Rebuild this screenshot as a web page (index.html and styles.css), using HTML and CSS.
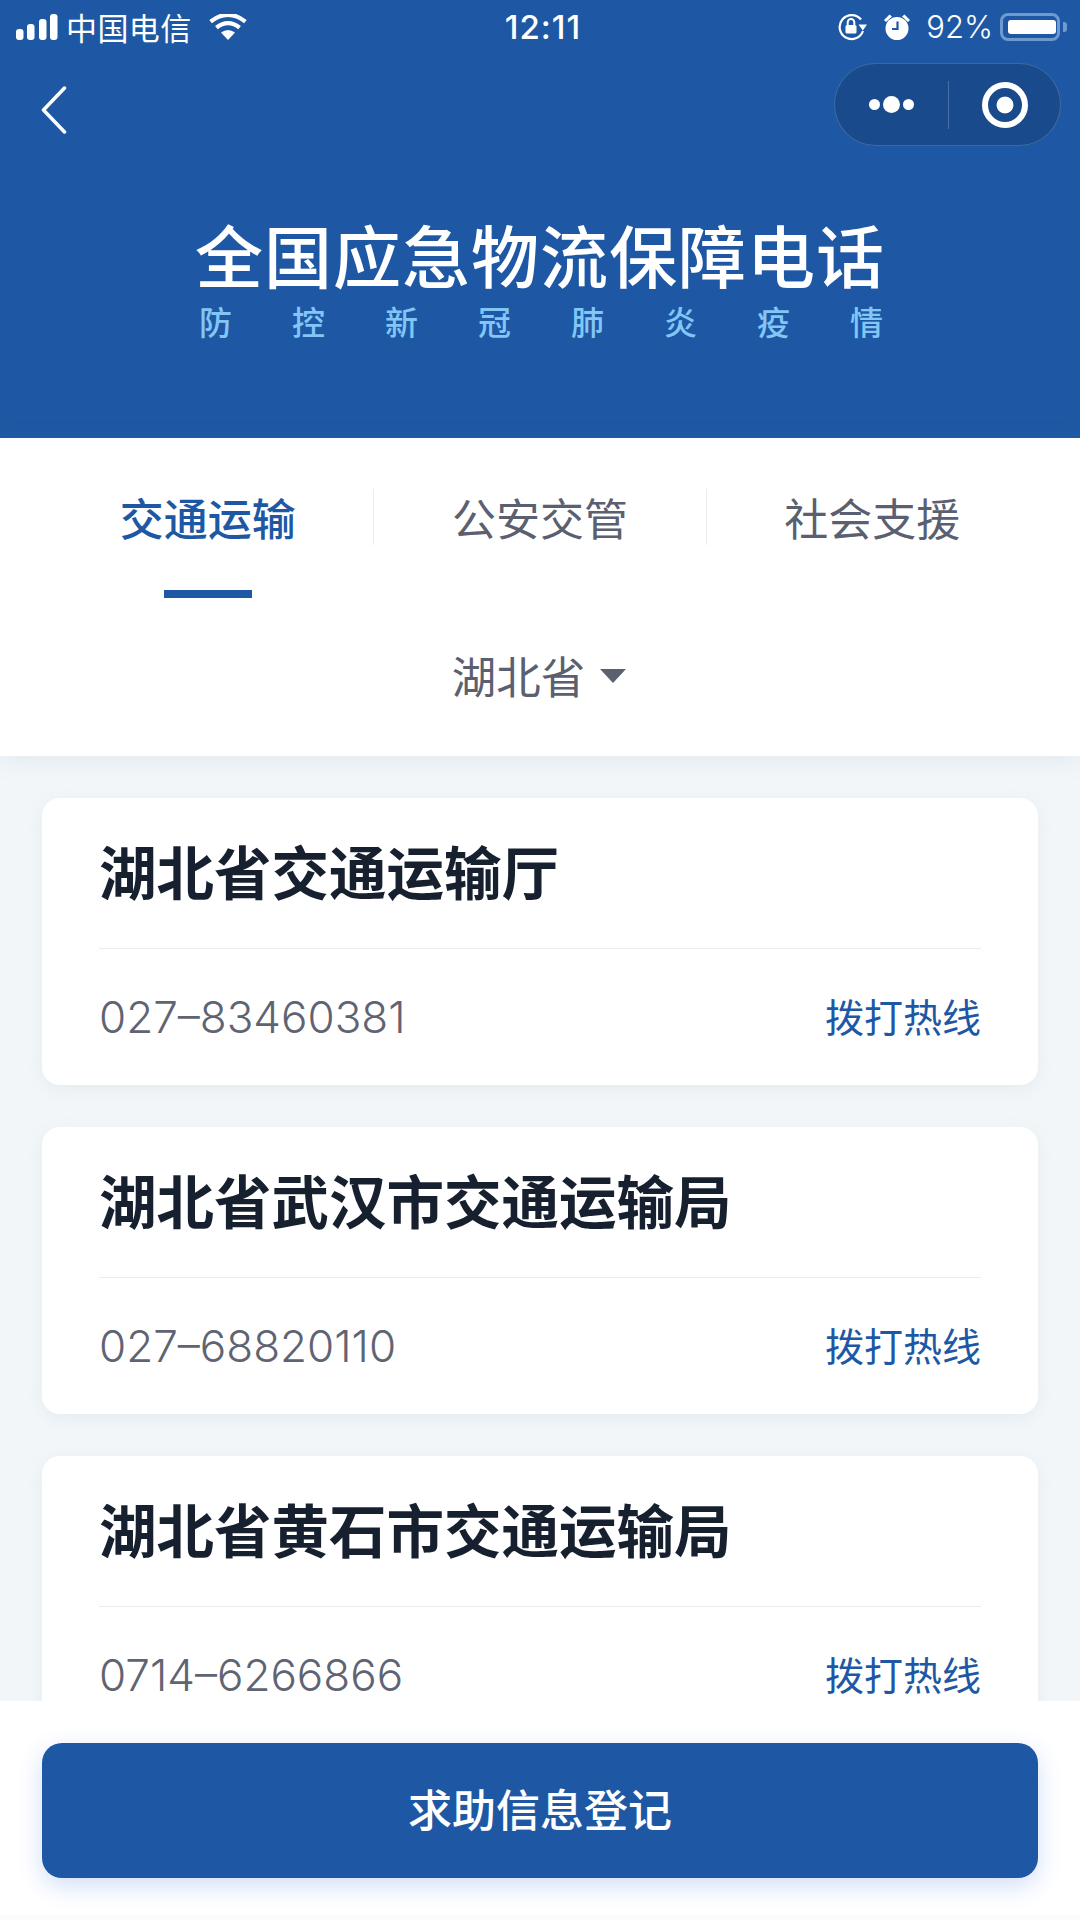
FILE: index.html
```html
<!DOCTYPE html>
<html lang="zh-CN">
<head>
<meta charset="utf-8">
<title>全国应急物流保障电话</title>
<link rel="stylesheet" href="styles.css">
</head>
<body>
<div class="page">
  <header class="hero">
    <div class="status">
      <div class="status-left">
        <svg class="signal" viewBox="0 0 42 26" width="42" height="26" fill="#fff">
          <rect x="0" y="15" width="7.5" height="11" rx="3"/>
          <rect x="11" y="10" width="7.5" height="16" rx="3"/>
          <rect x="23" y="5" width="7.5" height="21" rx="3"/>
          <rect x="34" y="0" width="7.5" height="26" rx="3"/>
        </svg>
        <span class="carrier">中国电信</span>
        <svg class="wifi" viewBox="0 0 38 26" width="38" height="26">
          <path d="M19 26 12 18.6Q19 13.4 26 18.6Z" fill="#fff"/>
          <path d="M7.4 13.6Q19 4.6 30.6 13.6" fill="none" stroke="#fff" stroke-width="4.2"/>
          <path d="M1.6 7.6Q19-6 36.4 7.6" fill="none" stroke="#fff" stroke-width="4.2"/>
        </svg>
      </div>
      <span class="clock">12:11</span>
      <div class="status-right">
        <svg class="lock" viewBox="0 0 30 28" width="30" height="28">
          <path d="M23 6.500A12 12 0 1 0 25 18" fill="none" stroke="#fff" stroke-width="2.200"/>
          <path d="M20.500 11.500h8.500L24.800 17.500Z" fill="#fff"/>
          <rect x="7.500" y="12" width="11" height="8.500" rx="1.500" fill="#fff"/>
          <path d="M9.700 12V9.300a3.300 3.300 0 0 1 6.600 0V12" fill="none" stroke="#fff" stroke-width="2"/>
        </svg>
        <svg class="alarm" viewBox="0 0 28 28" width="28" height="28">
          <circle cx="14" cy="15.500" r="11.500" fill="#fff"/>
          <path d="M1 7 6.500 1.500 9 3.500 3 9ZM27 7 21.500 1.500 19 3.500 25 9Z" fill="#fff"/>
          <path d="M14.500 8.500V16H9" fill="none" stroke="#1e58a4" stroke-width="2.200"/>
        </svg>
        <span class="percent">92%</span>
        <div class="battery"><div class="battery-level"></div></div>
        <div class="battery-cap"></div>
      </div>
    </div>
    <nav class="navbar">
      <svg class="back" viewBox="0 0 26 48" width="26" height="48">
        <path d="M23.500 2 2.500 24 23.500 46" fill="none" stroke="#fff" stroke-width="3.500" stroke-linecap="round" stroke-linejoin="round"/>
      </svg>
      <div class="capsule">
        <div class="capsule-dots">
          <span class="dot"></span><span class="dot dot-big"></span><span class="dot"></span>
        </div>
        <div class="capsule-line"></div>
        <div class="capsule-ring"></div>
      </div>
    </nav>
    <div class="headline">
      <h1 class="title">全国应急物流保障电话</h1>
      <p class="subtitle">防控新冠肺炎疫情</p>
    </div>
  </header>

  <section class="filters">
    <div class="tabs">
      <div class="tab tab-on">交通运输</div>
      <div class="tab">公安交管</div>
      <div class="tab">社会支援</div>
    </div>
    <div class="region">
      <span>湖北省</span>
      <svg class="caret" viewBox="0 0 26 14" width="26" height="14"><path d="M0 0H26L13 14Z" fill="#5b6070"/></svg>
    </div>
  </section>

  <main class="list">
    <article class="card">
      <h2 class="card-title">湖北省交通运输厅</h2>
      <div class="card-row">
        <span class="phone">027–83460381</span>
        <span class="call">拨打热线</span>
      </div>
    </article>
    <article class="card">
      <h2 class="card-title">湖北省武汉市交通运输局</h2>
      <div class="card-row">
        <span class="phone">027–68820110</span>
        <span class="call">拨打热线</span>
      </div>
    </article>
    <article class="card">
      <h2 class="card-title">湖北省黄石市交通运输局</h2>
      <div class="card-row">
        <span class="phone">0714–6266866</span>
        <span class="call">拨打热线</span>
      </div>
    </article>
  </main>

  <footer class="bottom">
    <div class="submit">求助信息登记</div>
  </footer>
</div>
</body>
</html>
```
FILE: styles.css
```css
* { box-sizing: border-box; }

html, body { margin: 0; padding: 0; }

body {
  font-family: "Noto Sans CJK SC", "Liberation Sans", sans-serif;
  background: #f2f6f9;
}

.page {
  width: 1080px;
  height: 1920px;
  display: flex;
  flex-direction: column;
  overflow: hidden;
}

/* Blue header: system bar, navigation row and headline */
.hero {
  height: 438px;
  flex: none;
  background: #1e58a4;
  color: #fff;
}

.status {
  height: 56px;
  padding: 0 13px 2px 16px;
  display: grid;
  grid-template-columns: 1fr auto 1fr;
  align-items: center;
}

.status-left, .status-right {
  display: flex;
  align-items: center;
}

.status-right { justify-content: flex-end; }

.carrier {
  margin-left: 8px;
  font-size: 31px;
  line-height: 36px;
  letter-spacing: 0.4px;
  font-weight: 400;
}

.wifi { margin-left: 17px; }

.clock {
  margin-left: 3px;
  font-family: "Inter", sans-serif;
  font-size: 33px;
  line-height: 36px;
  font-weight: 500;
  letter-spacing: 1px;
}

.lock { margin-right: 15px; }

.percent {
  margin: 0 7px 0 15px;
  font-family: "Inter", sans-serif;
  font-size: 31px;
  line-height: 36px;
  font-weight: 300;
}

.battery {
  width: 60px;
  height: 28px;
  padding: 4px;
  border: 3px solid #6f9ad0;
  border-radius: 8px;
}

.battery-level {
  width: 48px;
  height: 100%;
  margin-left: 1px;
  background: #fff;
  border-radius: 3px;
}

.battery-cap {
  width: 4px;
  height: 10px;
  margin-left: 3px;
  background: #6f9ad0;
  border-radius: 0 3px 3px 0;
}

.navbar {
  height: 95px;
  padding: 2px 19px 0 41px;
  display: flex;
  align-items: center;
  justify-content: space-between;
}

.back { margin-top: 10px; }

.capsule {
  width: 227px;
  height: 83px;
  display: flex;
  align-items: center;
  background: rgba(0, 0, 0, 0.14);
  border: 1px solid rgba(255, 255, 255, 0.16);
  border-radius: 42px;
}

.capsule-dots {
  width: 113px;
  display: flex;
  align-items: center;
  justify-content: center;
  gap: 3px;
}

.dot {
  width: 11px;
  height: 11px;
  background: #fff;
  border-radius: 50%;
}

.dot-big { width: 17px; height: 17px; }

.capsule-line {
  width: 1px;
  height: 48px;
  background: rgba(255, 255, 255, 0.2);
}

.capsule-ring {
  width: 46px;
  height: 46px;
  margin-left: 33px;
  border: 6px solid #fff;
  border-radius: 50%;
  background: radial-gradient(circle, #fff 0 8px, transparent 8.8px);
}

.headline {
  margin-top: 68px;
  text-align: center;
}

.title {
  margin: 0;
  font-size: 68px;
  line-height: 70px;
  font-weight: 500;
  letter-spacing: 1px;
}

.subtitle {
  margin: 12px 0 0;
  font-size: 33px;
  line-height: 40px;
  font-weight: 500;
  letter-spacing: 60px;
  padding-left: 62px;
  color: #82c6f6;
}

/* Tabs and province picker */
.filters {
  height: 318px;
  flex: none;
  background: #fff;
  box-shadow: 0 4px 22px rgba(110, 145, 155, 0.12);
  position: relative;
}

.tabs {
  height: 160px;
  padding: 50px 42px 0;
  display: flex;
  align-items: flex-start;
}

.tab {
  position: relative;
  flex: 1;
  height: 56px;
  font-size: 44px;
  line-height: 56px;
  text-align: center;
  font-weight: 400;
  color: #5b6070;
  border-left: 1px solid #ebedf0;
  top: 1px;
}

.tab:first-child { border-left: 0; }

.tab-on {
  color: #1e58a4;
  font-weight: 500;
}

.tab-on::after {
  content: "";
  position: absolute;
  left: 50%;
  top: 101px;
  width: 88px;
  height: 8px;
  margin-left: -44px;
  background: #1e58a4;
}

.region {
  height: 78px;
  margin-top: 38px;
  padding-right: 2px;
  display: flex;
  align-items: center;
  justify-content: center;
  gap: 15px;
  font-size: 44.500px;
  line-height: 56px;
  font-weight: 400;
  color: #5b6070;
}

.caret { margin-top: 1px; }

/* Contact cards */
.list {
  flex: 1;
  min-height: 0;
  overflow: hidden;
  padding: 42px 42px 0;
  display: flex;
  flex-direction: column;
  gap: 42px;
}

.card {
  flex: none;
  height: 287px;
  padding: 0 57px;
  background: #fff;
  border-radius: 18px;
  box-shadow: 0 4px 16px rgba(110, 145, 155, 0.1);
}

.card-title {
  height: 151px;
  margin: 0;
  font-size: 57.500px;
  line-height: 144px;
  font-weight: 700;
  color: #17202e;
  border-bottom: 1px solid #e9ebee;
}

.card-row {
  height: 135px;
  display: flex;
  align-items: center;
  justify-content: space-between;
}

.phone {
  font-family: "Inter", sans-serif;
  font-size: 44px;
  font-weight: 300;
  color: #5f6472;
}

.call {
  margin-top: -3px;
  font-size: 39px;
  font-weight: 400;
  color: #1e58a4;
}

/* Fixed action bar */
.bottom {
  height: 219px;
  flex: none;
  padding: 42px 42px 0;
  background: #fff;
  border-bottom: 5px solid #fbfbfb;
  position: relative;
}

.submit {
  height: 135px;
  font-size: 44px;
  line-height: 131px;
  text-align: center;
  font-weight: 500;
  color: #fff;
  background: #1e58a4;
  border-radius: 20px;
  box-shadow: 0 8px 24px rgba(30, 88, 220, 0.2);
}
```
